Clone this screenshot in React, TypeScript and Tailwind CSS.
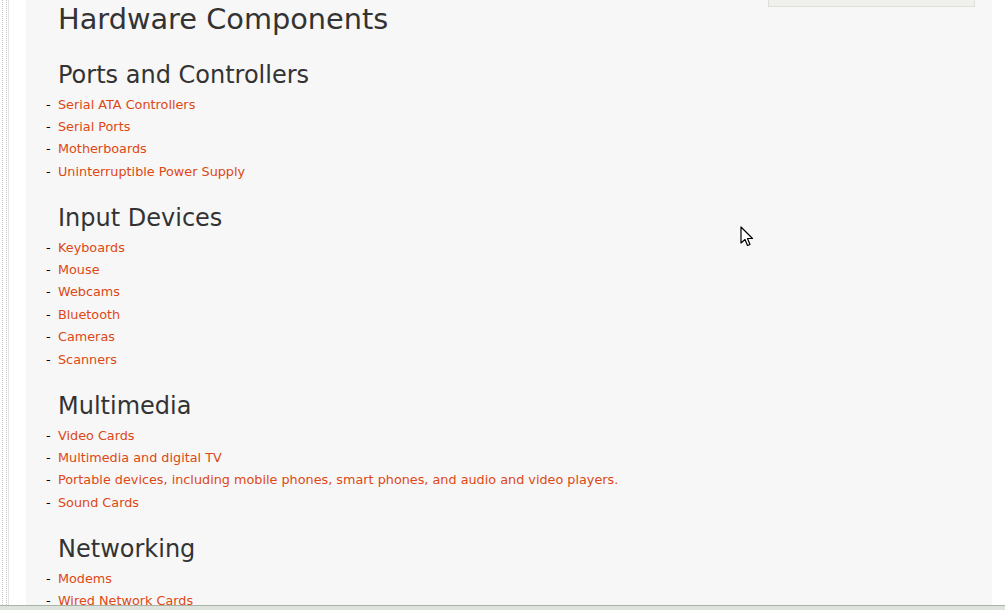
import React from 'react';

type Section = { title: string; items: string[] };

const sections: Section[] = [
  {
    title: 'Ports and Controllers',
    items: ['Serial ATA Controllers', 'Serial Ports', 'Motherboards', 'Uninterruptible Power Supply'],
  },
  {
    title: 'Input Devices',
    items: ['Keyboards', 'Mouse', 'Webcams', 'Bluetooth', 'Cameras', 'Scanners'],
  },
  {
    title: 'Multimedia',
    items: [
      'Video Cards',
      'Multimedia and digital TV',
      'Portable devices, including mobile phones, smart phones, and audio and video players.',
      'Sound Cards',
    ],
  },
  {
    title: 'Networking',
    items: ['Modems', 'Wired Network Cards'],
  },
];

function Cursor() {
  return (
    <svg className="absolute left-[740px] top-[226px]" width="14" height="22" viewBox="0 0 14 22">
      <path
        d="M1 1 L1 17 L5 13.5 L7.5 19.5 L10 18.5 L7.5 12.5 L12.5 12.5 Z"
        fill="#fff"
        stroke="#000"
        strokeWidth="1.2"
        strokeLinejoin="round"
      />
    </svg>
  );
}

export default function App() {
  return (
    <div
      className="relative w-[1005px] h-[610px] overflow-hidden bg-white flex flex-col"
      style={{ fontFamily: '"DejaVu Sans", Verdana, sans-serif' }}
    >
      <div className="flex flex-1 min-h-0">
        {/* left gutter */}
        <div className="w-[26px] shrink-0 flex">
          <div className="ml-[2px] w-px border-l border-dotted border-[#c8c8c8]" />
          <div className="ml-[3px] w-px border-l border-dotted border-[#c8c8c8]" />
          <div className="ml-px w-px bg-[#e4e4e4]" />
        </div>

        {/* main */}
        <div className="w-[966px] shrink-0 bg-[#f7f7f7] flex">
          <div className="flex-1 pl-[20px] text-[#333]">
            <h1 className="pl-[12px] text-[28.8px] leading-[36px] mt-px">Hardware Components</h1>
            {sections.map((s, i) => (
              <div key={s.title} className={i === 0 ? 'mt-[23px]' : 'mt-[20px]'}>
                <h2 className="pl-[12px] text-[24px] leading-[30px]">{s.title}</h2>
                <ul className="mt-[3.5px]">
                  {s.items.map((it) => (
                    <li key={it} className="flex leading-[22.4px] text-[12.8px]">
                      <span className="w-[12px] text-black">-</span>
                      <a className="text-[#dd4814]" href="#">
                        {it}
                      </a>
                    </li>
                  ))}
                </ul>
              </div>
            ))}
          </div>
          <div className="w-[224px] shrink-0 pr-[17px]">
            <div className="h-[7px] bg-[#f0f0ec] border border-t-0 border-[#dededa]" />
          </div>
        </div>

        <div className="flex-1 bg-white" />
      </div>

      {/* status bar */}
      <div className="h-[5px] shrink-0 border-t border-[#a9b4a9] bg-[#dfe3de]" />

      <Cursor />
    </div>
  );
}
